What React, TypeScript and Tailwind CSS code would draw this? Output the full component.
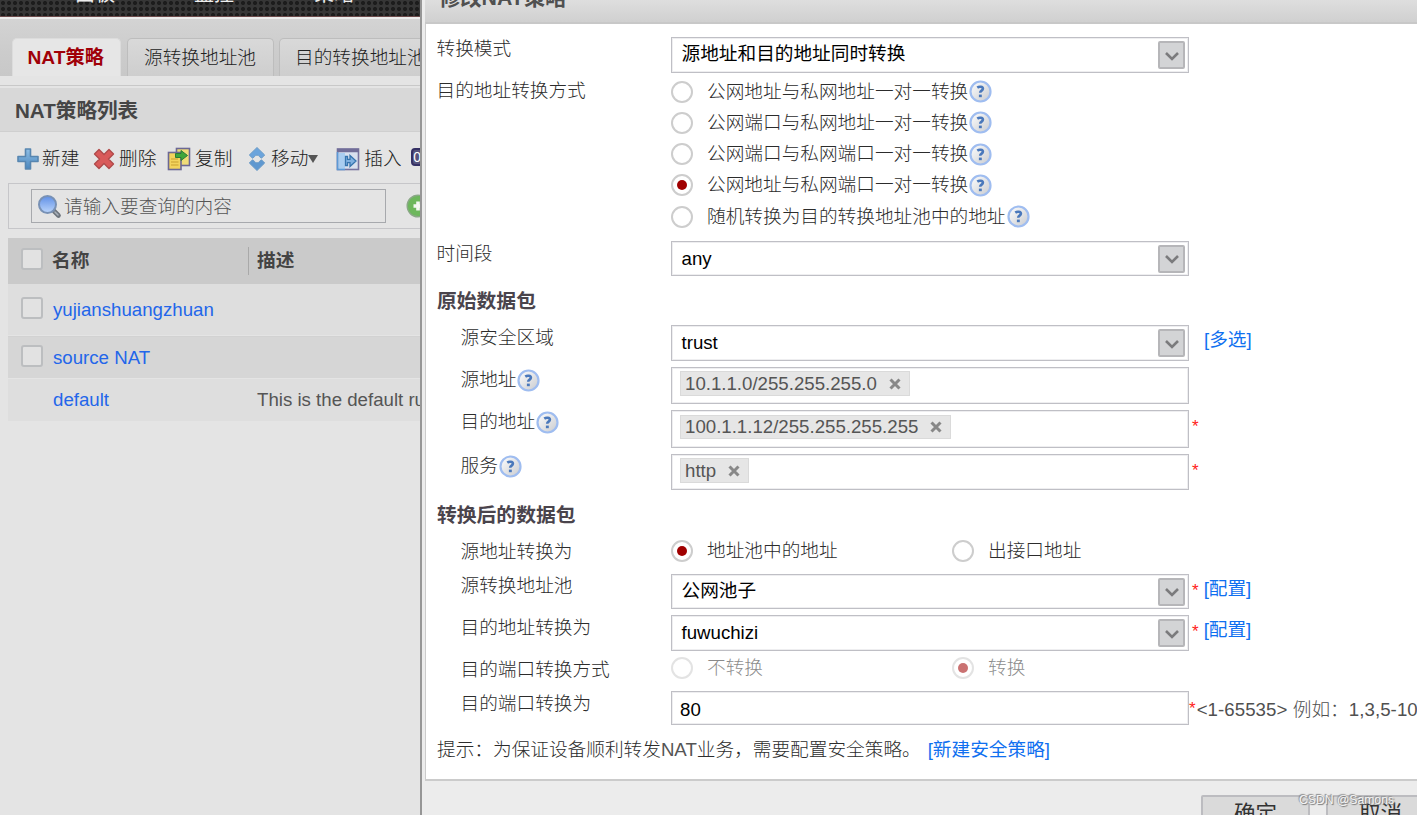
import type { ReactNode } from "react";
import { clsx } from "clsx";

const FONT = "font-['Liberation_Sans','Noto_Sans_CJK_SC',sans-serif]";

/* ---------- icons ---------- */

function PlusIcon() {
  return (
    <svg width="24" height="24" viewBox="0 0 24 24" className="shrink-0">
      <defs>
        <linearGradient id="plus" x1="0" y1="0" x2="0" y2="1">
          <stop offset="0" stopColor="#8fbfe6" />
          <stop offset="1" stopColor="#4a86bd" />
        </linearGradient>
      </defs>
      <path
        d="M9.500 2h5v7.500h7.500v5h-7.500v7.500h-5v-7.500h-7.500v-5h7.500z"
        fill="url(#plus)"
        stroke="#5886b0"
        strokeWidth="1.600"
        strokeLinejoin="round"
      />
    </svg>
  );
}

function DeleteIcon() {
  return (
    <svg width="22" height="22" viewBox="0 0 22 22" className="shrink-0">
      <path
        d="M6 1.500l5 5 5-5 4.500 4.500-5 5 5 5-4.500 4.500-5-5-5 5L1.500 16l5-5-5-5z"
        fill="#d95a5a"
        stroke="#b04a4a"
        strokeWidth="1.400"
        strokeLinejoin="round"
      />
    </svg>
  );
}

function CopyIcon() {
  return (
    <svg width="24" height="24" viewBox="0 0 24 24" className="shrink-0">
      <rect x="9.500" y="1.500" width="13" height="17" fill="#f0dc78" stroke="#6c6894" strokeWidth="1.600" />
      <rect x="1.500" y="5.500" width="12.500" height="17" fill="#f2d35c" stroke="#6c6894" strokeWidth="1.600" />
      <path d="M4 12h7M4 15h7.500M4 18h7.500" stroke="#c79f2e" strokeWidth="1.200" />
      <path d="M8.500 6.500h5.500V3.500l6.500 5-6.500 5v-3h-5.500z" fill="#3fa63a" stroke="#2c7a35" />
    </svg>
  );
}

function MoveIcon() {
  return (
    <svg width="18" height="24" viewBox="0 0 18 24" className="shrink-0">
      <path d="M9 0.500l7.700 7.500-3.200 3.200-2.200-1.700a2.600 2.600 0 0 0-4.600 0l-2.200 1.700L1.300 8z" fill="#6ba4dc" stroke="#6d9cc6" />
      <path d="M9 23.500l7.700-7.500-3.200-3.200-2.200 1.700a2.600 2.600 0 0 1-4.600 0l-2.200-1.700L1.300 16z" fill="#5f98d0" stroke="#6d9cc6" />
    </svg>
  );
}

function InsertIcon() {
  return (
    <svg width="24" height="24" viewBox="0 0 24 24" className="shrink-0">
      <rect x="1.500" y="2" width="21" height="20.500" fill="#d8e0ee" stroke="#77739f" strokeWidth="1.600" />
      <path d="M1 3.500h22" stroke="#716d98" strokeWidth="3.500" />
      <path d="M2.500 6h6.500v16H2.500z" fill="#a9cdf0" />
      <path d="M1.500 5v17.500H9" fill="none" stroke="#5c9ad6" strokeWidth="1.600" />
      <path
        d="M9.500 9.500h2v2.800H14V8.500l6 5.500-6 5.500v-3.800h-2.500v2.800h-2z"
        fill="#7fb0e0"
        stroke="#3674ae"
        strokeWidth="1.300"
      />
    </svg>
  );
}

function SearchIcon() {
  return (
    <svg width="25" height="25" viewBox="0 0 25 25" className="shrink-0">
      <defs>
        <linearGradient id="lens" x1="0" y1="0" x2="0" y2="1">
          <stop offset="0" stopColor="#5f8fe6" />
          <stop offset="1" stopColor="#bcd6fb" />
        </linearGradient>
      </defs>
      <path d="M17 17l4.500 4.500" stroke="#6d747c" strokeWidth="4.600" strokeLinecap="round" />
      <path d="M18 18l3 3" stroke="#a9b1ba" strokeWidth="1.600" strokeLinecap="round" />
      <circle cx="10.500" cy="10.500" r="8.500" fill="url(#lens)" stroke="#7891b5" strokeWidth="2" />
    </svg>
  );
}

function AddCircleIcon() {
  return (
    <svg width="24" height="24" viewBox="0 0 24 24" className="shrink-0">
      <circle cx="12" cy="12" r="10.800" fill="#6db75c" stroke="#8aa886" strokeWidth="1.400" />
      <path d="M12 7.500v9M7.500 12h9" stroke="#f4f8f3" strokeWidth="3.600" />
    </svg>
  );
}

function HelpIcon() {
  return (
    <svg width="23" height="23" viewBox="0 0 23 23" className="ml-px shrink-0">
      <defs>
        <linearGradient id="help" x1="0" y1="0" x2="1" y2="1">
          <stop offset="0" stopColor="#ffffff" />
          <stop offset="1" stopColor="#c8cace" />
        </linearGradient>
      </defs>
      <circle cx="11.500" cy="11.500" r="10" fill="url(#help)" stroke="#9fbdf0" strokeWidth="2.200" />
      <path
        d="M8.300 7.600c1.800-1.300 5.600-1.200 5.600 1.100 0 1.900-2.700 1.900-2.700 4"
        fill="none"
        stroke="#4a78bb"
        strokeWidth="2.600"
      />
      <rect x="9.900" y="14.600" width="2.900" height="2.600" fill="#4a78bb" />
    </svg>
  );
}

function TagCross() {
  return (
    <svg width="12" height="12" viewBox="0 0 12 12" className="shrink-0">
      <path d="M1.500 1.500l9 9M10.500 1.500l-9 9" stroke="#888" strokeWidth="3" />
    </svg>
  );
}

/* ---------- policy list behind the dialog ---------- */

function Tab({ children, active, className }: { children: ReactNode; active?: boolean; className: string }) {
  return (
    <div
      className={clsx(
        "h-[38px] shrink-0 rounded-t-[5px] border border-b-0 leading-[37px] whitespace-nowrap",
        active
          ? "border-[#dcdcdc] bg-[#e6e6e6] text-[19.200px] font-bold text-[#a00008]"
          : "border-[#bdbdbd] bg-linear-to-b from-[#d9d9d9] to-[#cecece] text-[18.67px] font-light text-[#222]",
        className,
      )}
    >
      {children}
    </div>
  );
}

function ToolButton({ icon, label, className }: { icon: ReactNode; label: string; className?: string }) {
  return (
    <div className={clsx("flex shrink-0 items-center", className)}>
      {icon}
      <span className="text-[18.67px] font-light whitespace-nowrap text-[#222]">{label}</span>
    </div>
  );
}

function CheckBox() {
  return (
    <span className="mb-1 block size-[22px] shrink-0 rounded-[3px] border-2 border-[#bcbec0] bg-[#e2e2e2]" />
  );
}

function PolicyPage() {
  return (
    <div className="flex w-[420px] shrink-0 flex-col overflow-hidden bg-[#e4e4e4] text-[#3a3a3a]">
      <div className="flex h-4 shrink-0 overflow-hidden bg-[#363636] bg-[radial-gradient(circle,#1c1c1c_1.6px,transparent_2.4px)] bg-size-[6px_6px] text-[20px] leading-[24px] text-[#eee]">
        <span className="-mt-[18px] ml-[75px] w-[119px]">面板</span>
        <span className="-mt-[18px] w-[120px]">监控</span>
        <span className="-mt-[18px]">策略</span>
      </div>
      <div className="flex h-[60px] shrink-0 items-end border-t border-[#6c4a4a] bg-linear-to-b from-[#d4d4d4] via-[#cdcdcd] to-[#c8c8c8] pl-3 shadow-[inset_0_2px_0_#ececec]">
        <Tab active className="w-[109px] pl-[14.500px]">
          NAT策略
        </Tab>
        <Tab className="ml-1.5 w-[147px] pl-4">源转换地址池</Tab>
        <Tab className="ml-[5px] w-[166px] pl-[15px]">目的转换地址池</Tab>
      </div>
      <div className="h-[10px] shrink-0 border-b border-[#c8c8c8]" />
      <div className="mt-0.5 h-[44px] shrink-0 border-b border-[#cfcfcf] bg-[#d8d8d8] pl-[15px] text-[20.600px] leading-[46px] font-bold text-[#464646]">
        NAT策略列表
      </div>

      <div className="flex h-[51px] shrink-0 items-center pt-[2px] pl-4">
        <ToolButton icon={<PlusIcon />} label="新建" className="w-[77px] gap-[2px]" />
        <ToolButton icon={<DeleteIcon />} label="删除" className="w-[74px] gap-[4px]" />
        <ToolButton icon={<CopyIcon />} label="复制" className="w-[81px] gap-1" />
        <ToolButton icon={<MoveIcon />} label="移动" className="gap-[5px]" />
        <svg width="10" height="8" viewBox="0 0 10 8" className="mr-[18px] shrink-0">
          <path d="M0 0h10L5 8z" fill="#555" />
        </svg>
        <ToolButton icon={<InsertIcon />} label="插入" className="w-[75px] gap-[4px]" />
        <span className="mb-[3px] h-[18px] w-6 shrink-0 rounded-[4px] border-2 border-[#343064] bg-[#56547c] text-[14px] leading-[14px] text-white">
          0
        </span>
      </div>

      <div className="ml-2 flex h-[46px] w-[640px] shrink-0 items-center border border-[#c6c6c9] pl-[22px]">
        <div className="flex h-[34px] w-[355px] items-center gap-[2px] border border-[#a7a9ad] pl-[5px]">
          <SearchIcon />
          <span className="pt-[2px] text-[18.67px] font-light text-[#555]">请输入要查询的内容</span>
        </div>
        <div className="ml-5">
          <AddCircleIcon />
        </div>
      </div>

      <div className="mt-[9px] ml-2 flex h-[46px] shrink-0 items-center bg-[#cacaca] pl-[13px] text-[18.67px] font-bold text-[#444]">
        <CheckBox />
        <span className="ml-[9px] w-[196px]">名称</span>
        <span className="h-[28px] border-l border-[#a9a9a9]" />
        <span className="ml-2">描述</span>
      </div>
      <div className="ml-2 flex h-[51px] shrink-0 items-center bg-[#dedede] pl-[13px] text-[18.67px]">
        <CheckBox />
        <span className="ml-[10px] text-[#2366ea]">yujianshuangzhuan</span>
      </div>
      <div className="mt-px ml-2 flex h-[42px] shrink-0 items-center border-t border-[#d2d2d2] bg-[#d6d6d6] pl-[13px] text-[18.67px]">
        <CheckBox />
        <span className="ml-[10px] text-[#2366ea]">source NAT</span>
      </div>
      <div className="mt-px ml-2 flex h-[42px] shrink-0 items-center bg-[#dedede] pl-[45px] text-[18.67px] whitespace-nowrap">
        <span className="w-[204px] shrink-0 text-[#2366ea]">default</span>
        <span className="text-[#555]">This is the default rule</span>
      </div>
    </div>
  );
}

/* ---------- form parts ---------- */

const BOX = "border border-[#bfbfc5] bg-white shadow-[inset_0_0_0_1px_#eeeef0]";

interface FieldProps {
  label: string;
  children: ReactNode;
  /** row height, including the gap below it */
  className: string;
  labelClass?: string;
  indent?: boolean;
  help?: boolean;
}

function Field({ label, children, className, labelClass, indent, help }: FieldProps) {
  return (
    <div className={clsx("flex shrink-0 items-start", className)}>
      <div
        className={clsx(
          "flex h-6 w-[245px] shrink-0 items-center font-light whitespace-nowrap",
          indent ? "pl-[34.500px]" : "pl-[10.500px]",
          labelClass,
        )}
      >
        {label}
        {help && <HelpIcon />}
      </div>
      {children}
    </div>
  );
}

function SelectBox({ value, className, valueClass }: { value: string; className: string; valueClass?: string }) {
  return (
    <div className={clsx("flex w-[518px] shrink-0 items-center justify-between pr-[3px] pl-[9.500px] text-black", BOX, className)}>
      <span className={valueClass}>{value}</span>
      <span className="flex h-[28px] w-[27px] items-center justify-center rounded-[2px] border-2 border-[#b6b6b9] bg-[#d3d4d6]">
        <svg width="16" height="11" viewBox="0 0 16 11" className="mt-0.5">
          <path d="M2 2l6 6 6-6" fill="none" stroke="#7b7b7d" strokeWidth="2.600" />
        </svg>
      </span>
    </div>
  );
}

function TagBox({ tag, className, tagClass }: { tag: string; className: string; tagClass: string }) {
  return (
    <div className={clsx("flex w-[518px] shrink-0 items-start pl-2", BOX, className)}>
      <span className={clsx("flex items-center gap-[12px] border border-[#dadada] bg-[#e6e6e6] pr-2 pl-1 text-[#555]", tagClass)}>
        {tag}
        <TagCross />
      </span>
    </div>
  );
}

function Radio({ label, checked, disabled, help }: { label: string; checked?: boolean; disabled?: boolean; help?: boolean }) {
  return (
    <div className={clsx("flex h-full items-center font-light whitespace-nowrap", disabled && "opacity-55")}>
      <span className="mr-[14px] flex size-[22px] shrink-0 items-center justify-center rounded-full border-2 border-[#cdcdcd] bg-white">
        {checked && <span className="size-[10px] rounded-full bg-[#a00000]" />}
      </span>
      {label}
      {help && <HelpIcon />}
    </div>
  );
}

function SectionTitle({ children }: { children: ReactNode }) {
  return <div className="h-[37px] shrink-0 pt-px pl-[11px] text-[19.800px] leading-6 font-bold text-[#4a444c]">{children}</div>;
}

function Star() {
  return <span className="mt-[5px] ml-[3px] text-[17px] leading-6 text-[#ff2020]">*</span>;
}

const DEST_MODES = [
  "公网地址与私网地址一对一转换",
  "公网端口与私网地址一对一转换",
  "公网端口与私网端口一对一转换",
  "公网地址与私网端口一对一转换",
  "随机转换为目的转换地址池中的地址",
];

function PolicyDialog() {
  return (
    <div className="flex min-w-0 flex-1 flex-col overflow-hidden border-l-2 border-[#969696] bg-[#ececec] pl-[3px]">
      <div className="h-6 shrink-0 overflow-hidden border-b-2 border-[#c8c8c8] bg-linear-to-b from-[#dedede] to-[#d0d0d0] pl-[14px] text-[21.300px] leading-6 font-bold text-[#505050]">
        <span className="-mt-[14px] block">修改NAT策略</span>
      </div>

      <div className="flex h-[757px] shrink-0 flex-col border-b-2 border-l border-[#cbcbcb] bg-white pt-3 text-[18.67px] leading-6 text-[#2c2c2c]">
        <Field label="转换模式" className="h-[41px]" labelClass="mt-px">
          <SelectBox value="源地址和目的地址同时转换" className="mt-px h-9" valueClass="-mt-[2px]" />
        </Field>
        <Field label="目的地址转换方式" className="h-[164px]" labelClass="mt-[2px]">
          <div className="-mt-px flex flex-col">
            {DEST_MODES.map((mode, i) => (
              <div key={mode} className="h-[31.250px]">
                <Radio label={mode} checked={i === 3} help />
              </div>
            ))}
          </div>
        </Field>
        <Field label="时间段" className="h-[47px]" labelClass="mt-px">
          <SelectBox value="any" className="h-[35px]" />
        </Field>

        <SectionTitle>原始数据包</SectionTitle>
        <Field label="源安全区域" className="h-[42px]" indent labelClass="mt-px">
          <SelectBox value="trust" className="h-9" />
          <span className="mt-[3px] ml-[15px] text-[#1070f0]">[多选]</span>
        </Field>
        <Field label="源地址" className="h-[43px]" labelClass="mt-px" indent help>
          <TagBox tag="10.1.1.0/255.255.255.0" className="h-[37px]" tagClass="mt-[3px] h-[25px]" />
        </Field>
        <Field label="目的地址" className="h-[44px]" indent help>
          <TagBox tag="100.1.1.12/255.255.255.255" className="h-[38px]" tagClass="mt-[4px] h-[24px]" />
          <Star />
        </Field>
        <Field label="服务" className="h-[48px]" indent help>
          <TagBox tag="http" className="h-9" tagClass="mt-[3px] h-[25px]" />
          <Star />
        </Field>

        <SectionTitle>转换后的数据包</SectionTitle>
        <Field label="源地址转换为" className="h-[35px]" indent labelClass="mt-px">
          <div className="flex h-6">
            <div className="w-[281px]">
              <Radio label="地址池中的地址" checked />
            </div>
            <Radio label="出接口地址" />
          </div>
        </Field>
        <Field label="源转换地址池" className="h-[41px]" indent>
          <SelectBox value="公网池子" className="h-[35px]" valueClass="-mt-px" />
          <Star />
          <span className="mt-[3px] ml-[5px] text-[#1070f0]">[配置]</span>
        </Field>
        <Field label="目的地址转换为" className="h-[41px]" indent labelClass="mt-px">
          <SelectBox value="fuwuchizi" className="h-9" />
          <Star />
          <span className="mt-[3px] ml-[5px] text-[#1070f0]">[配置]</span>
        </Field>
        <Field label="目的端口转换方式" className="h-[35px]" labelClass="mt-[2px]" indent>
          <div className="flex h-6">
            <div className="w-[281px]">
              <Radio label="不转换" disabled />
            </div>
            <Radio label="转换" checked disabled />
          </div>
        </Field>
        <Field label="目的端口转换为" className="h-[47px]" indent labelClass="mt-px">
          <div className={clsx("flex h-[34px] w-[518px] shrink-0 items-center pt-[3px] pl-2 text-black", BOX)}>80</div>
          <span className="mt-[6px] text-[17px] text-[#ff2020]">*</span>
          <span className="mt-[7px] ml-px font-light tracking-[0.06px] whitespace-nowrap text-[#505050]">
            &lt;1-65535&gt; 例如：1,3,5-10
          </span>
        </Field>
        <div className="pl-[11px] font-light whitespace-nowrap">
          提示：为保证设备顺利转发<span className="text-[#555]">NAT</span>业务，需要配置安全策略。
          <span className="ml-[7px] font-normal text-[#1070f0]">[新建安全策略]</span>
        </div>
      </div>

      <div className="relative flex flex-1 items-start gap-4 overflow-hidden pt-[14px] pl-[776px] text-[21.500px] leading-[34px] text-[#333]">
        <div className="h-10 w-[109px] shrink-0 rounded-[2px] border-2 border-[#bcbcc0] bg-[#dadada] text-center">
          确定
        </div>
        <div className="h-10 w-[109px] shrink-0 rounded-[2px] border-2 border-[#bcbcc0] bg-[#dadada] text-center">
          取消
        </div>
        <span className="absolute top-[11px] left-[874px] text-[12.200px] leading-4 text-[#f4f4f4] [text-shadow:1px_1px_1px_#777,-1px_-1px_1px_#888]">
          CSDN @Samons
        </span>
      </div>
    </div>
  );
}

export default function App() {
  return (
    <div className={clsx("flex h-[815px] w-[1417px] overflow-hidden", FONT)}>
      <PolicyPage />
      <PolicyDialog />
    </div>
  );
}
